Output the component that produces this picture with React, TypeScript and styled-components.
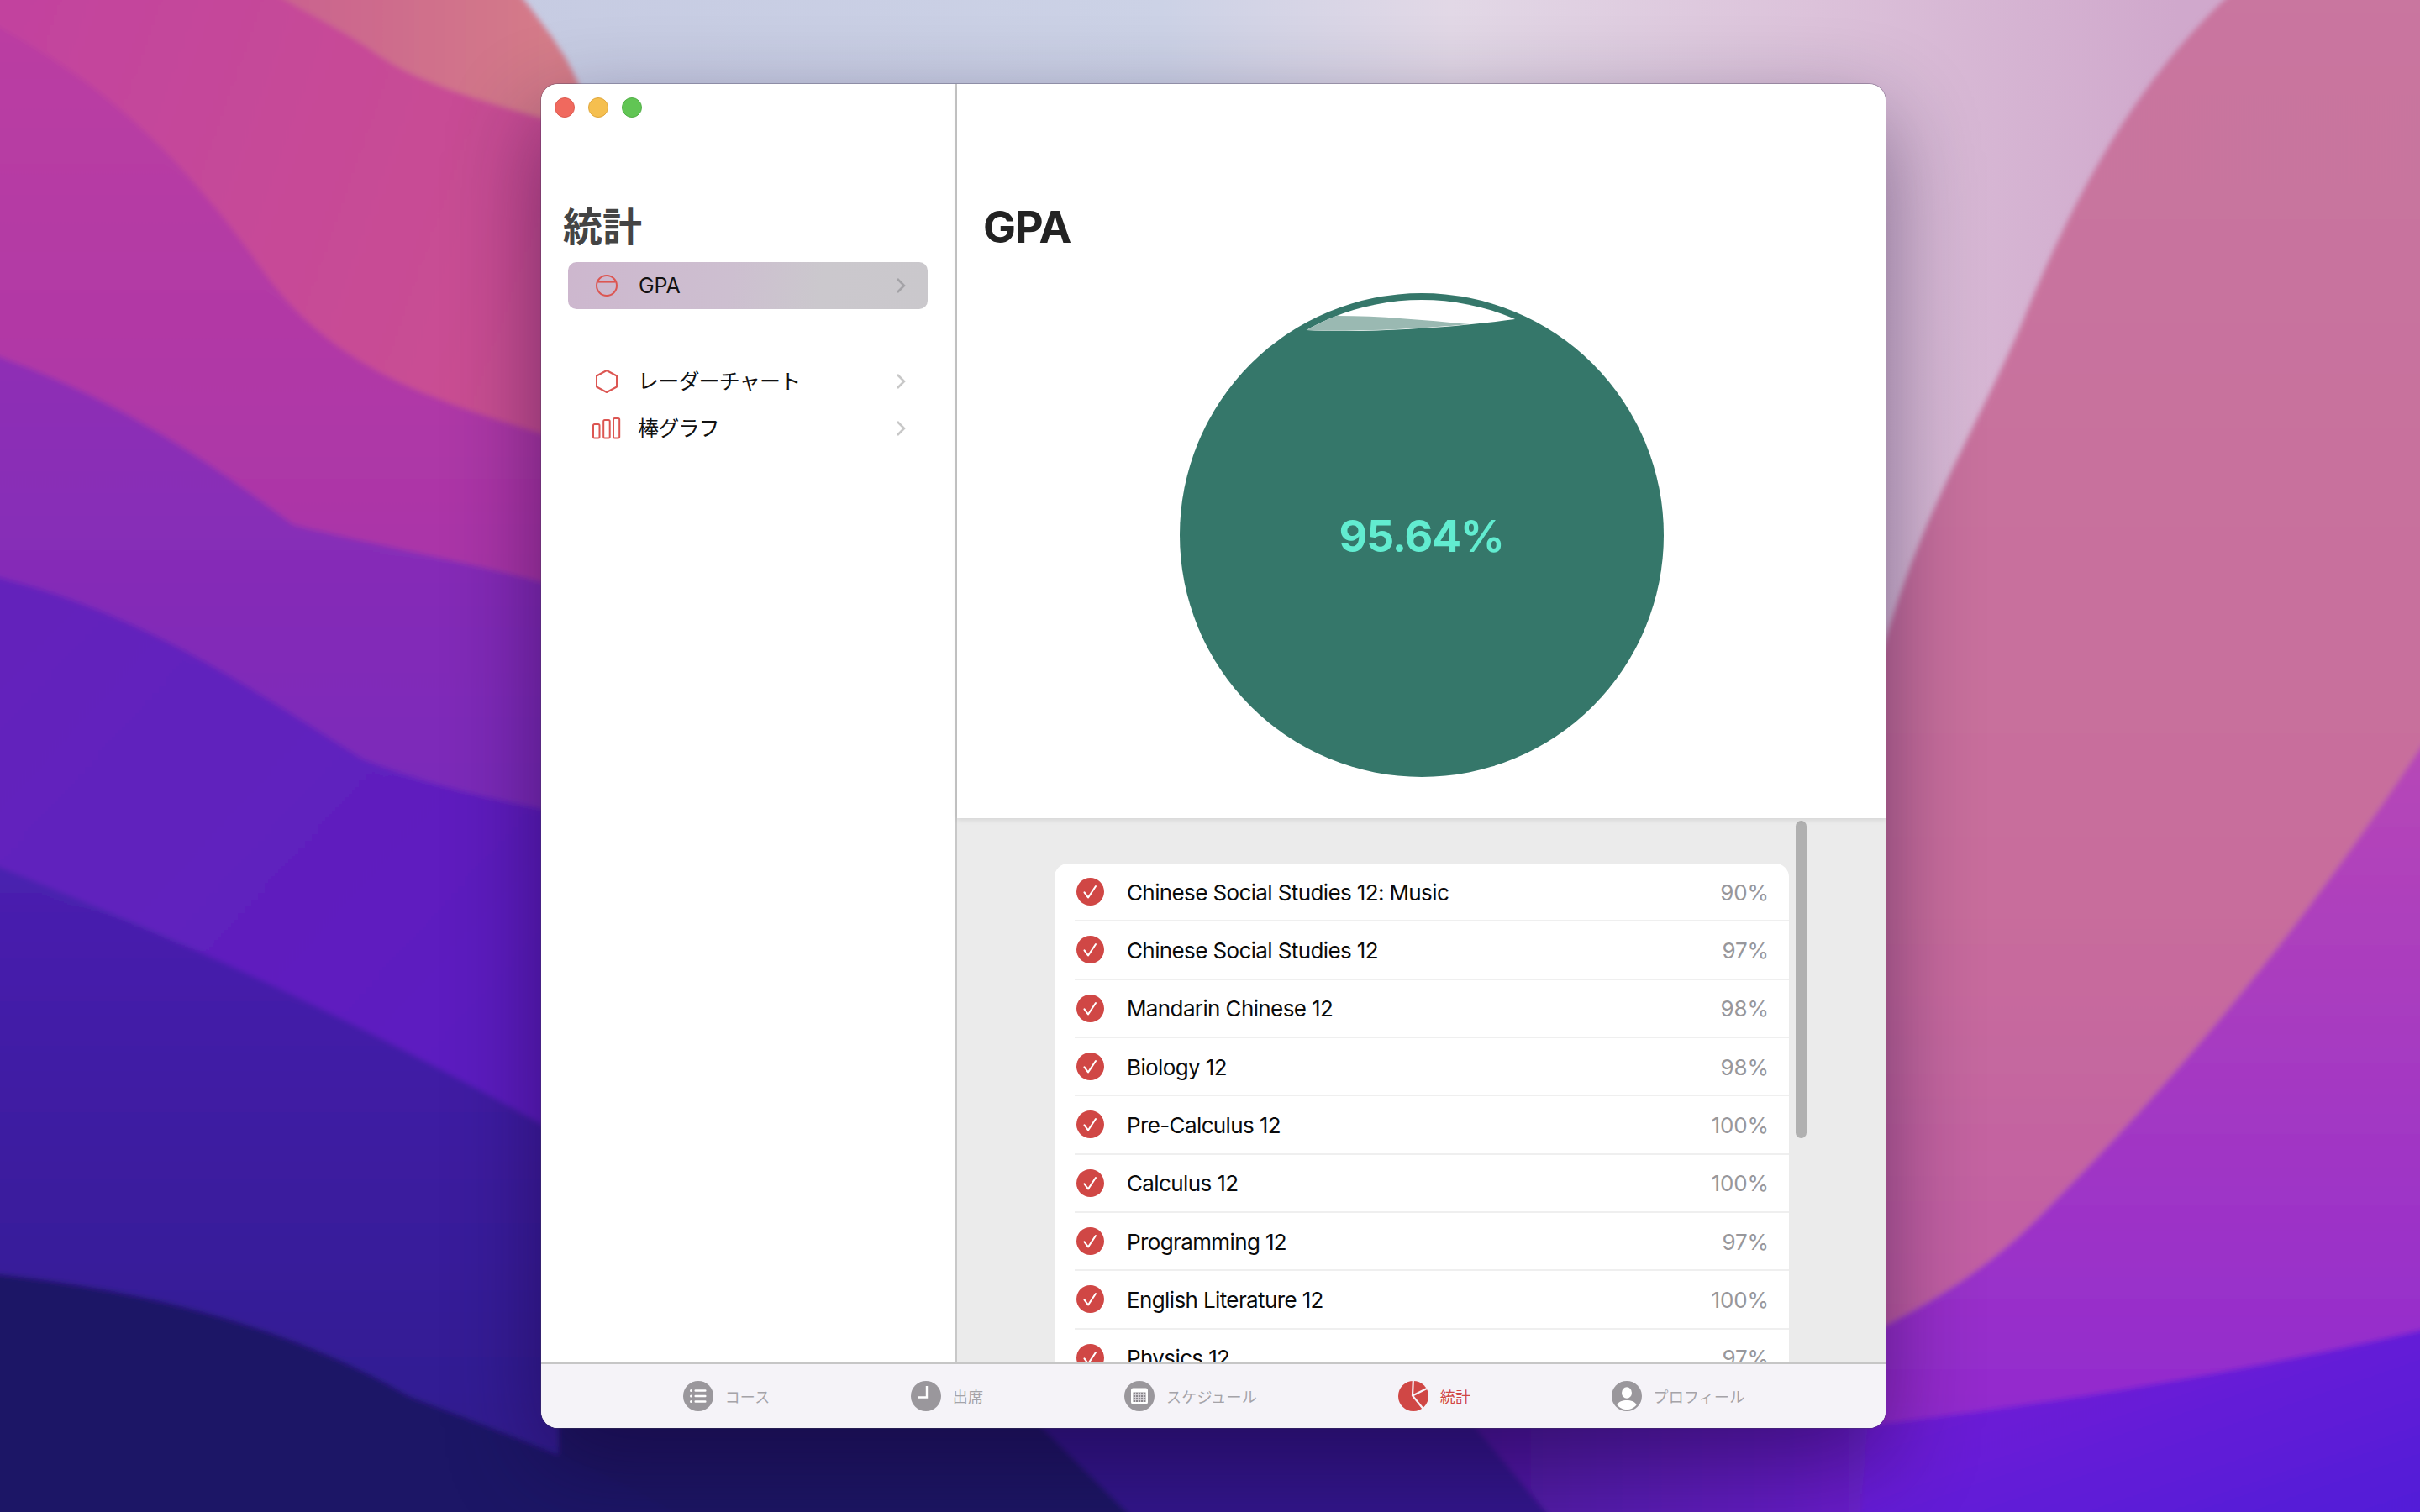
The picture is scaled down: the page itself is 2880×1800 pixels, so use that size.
import React from 'react';
import styled, { createGlobalStyle } from 'styled-components';

const GlobalStyle = createGlobalStyle`
  html, body {
    margin: 0;
    padding: 0;
    background: #2a1a78;
  }
  * {
    box-sizing: border-box;
  }
`;

const latin = `Inter, "Noto Sans CJK JP", sans-serif`;
const red = '#d04745';
const redLine = '#dc5652';
const grey = '#9a979c';
const green = '#35776a';

const Desktop = styled.div`
  position: relative;
  width: 2880px;
  height: 1800px;
  overflow: hidden;
  padding: 100px 0 0 644px;
`;

const WallpaperSvg = styled.svg`
  position: absolute;
  inset: 0;
  width: 2880px;
  height: 1800px;
`;

const Window = styled.div`
  position: relative;
  display: flex;
  flex-direction: column;
  width: 1600px;
  height: 1600px;
  border-radius: 20px;
  overflow: hidden;
  background: #fff;
  box-shadow: 0 0 0 1px rgba(70, 60, 90, 0.35), 0 40px 110px rgba(20, 0, 50, 0.48);
`;

const Main = styled.div`
  display: flex;
  flex: 1;
  min-height: 0;
`;

const Sidebar = styled.aside`
  position: relative;
  width: 495px;
  flex: none;
  padding: 137px 33px 0 32px;
  border-right: 2px solid #c8c8c8;
  background: #fff;
`;

const TrafficLights = styled.div`
  position: absolute;
  top: 16px;
  left: 16px;
  display: flex;
  gap: 16px;
`;

const Light = styled.span<{ $fill: string; $edge: string }>`
  width: 24px;
  height: 24px;
  border-radius: 50%;
  background: ${(p) => p.$fill};
  border: 1px solid ${(p) => p.$edge};
`;

const SidebarTitle = styled.h1`
  margin: 0 0 15px -6px;
  height: 60px;
  font-family: "Noto Sans CJK JP", sans-serif;
  font-size: 47px;
  line-height: 60px;
  font-weight: 700;
  color: #444;
`;

const NavRow = styled.div<{ $selected?: boolean; $gapBefore?: boolean }>`
  display: flex;
  align-items: center;
  height: ${(p) => (p.$selected ? '56px' : '55.5px')};
  margin-top: ${(p) => (p.$gapBefore ? '58.5px' : '0')};
  padding: 0 26px 0 28px;
  border-radius: 10px;
  background: ${(p) => (p.$selected ? 'linear-gradient(100deg, #cdb7ce 0%, #cdbfd0 45%, #cbc8cd 70%, #cac8cc 100%)' : 'transparent')};
`;

const NavIcon = styled.span`
  display: flex;
  align-items: center;
  justify-content: center;
  width: 36px;
  margin-right: 20px;
  flex: none;
`;

const NavLabel = styled.span<{ $jp?: boolean }>`
  flex: 1;
  margin-bottom: ${(p) => (p.$jp ? '4px' : '0')};
  margin-left: ${(p) => (p.$jp ? '-1px' : '0')};
  font-family: ${latin};
  font-size: 25px;
  letter-spacing: ${(p) => (p.$jp ? '-0.8px' : '-0.2px')};
  color: #111;
`;

const Content = styled.section`
  display: flex;
  flex-direction: column;
  flex: 1;
  min-width: 0;
`;

const ChartPanel = styled.div`
  position: relative;
  z-index: 1;
  height: 874px;
  flex: none;
  padding-top: 141px;
  background: #fff;
  box-shadow: 0 2px 6px rgba(0, 0, 0, 0.1);
`;

const ChartTitle = styled.h2`
  margin: 0 0 0 31px;
  height: 60px;
  font-family: ${latin};
  font-size: 52px;
  line-height: 60px;
  font-weight: 700;
  letter-spacing: -1px;
  color: #232323;
`;

const Chart = styled.div`
  position: relative;
  width: 576px;
  height: 576px;
  margin: 48px auto 0;
`;

const Percent = styled.div`
  position: absolute;
  left: 0;
  right: 0;
  top: 262.5px;
  text-align: center;
  font-family: ${latin};
  font-size: 52px;
  line-height: 54px;
  font-weight: 700;
  letter-spacing: -1.2px;
  color: #62ecd0;
`;

const ListPanel = styled.div`
  position: relative;
  flex: 1;
  min-height: 0;
  overflow: hidden;
  padding: 54px 0 0 116px;
  background: #ebebeb;
`;

const ScrollThumb = styled.div`
  position: absolute;
  top: 3px;
  left: 998px;
  width: 13px;
  height: 378px;
  border-radius: 7px;
  background: #b0b0b0;
`;

const Card = styled.div`
  width: 874px;
  border-radius: 16px;
  background: #fff;
`;

const CourseRow = styled.div`
  display: flex;
  align-items: center;
  height: 69.33px;
  margin-left: 24px;
  padding: 0 24px 0 2px;
  border-bottom: 2px solid #efefef;
`;

const CourseName = styled.span`
  flex: 1;
  margin: 1px 0 0 27px;
  font-family: ${latin};
  font-size: 26px;
  letter-spacing: -0.62px;
  color: #0b0b0b;
`;

const CourseScore = styled.span`
  margin-top: 1px;
  font-family: ${latin};
  font-size: 26px;
  letter-spacing: -0.1px;
  color: #98979b;
`;

const TabBar = styled.nav`
  display: grid;
  grid-template-columns: 235px repeat(4, 290px);
  align-items: center;
  height: 78px;
  flex: none;
  padding-left: 103px;
  border-top: 2px solid #c6c6c6;
  background: #f5f3f8;
`;

const Tab = styled.div`
  display: flex;
  align-items: center;
  justify-content: center;
  gap: 14px;
`;

const TabLabel = styled.span<{ $active?: boolean }>`
  font-family: ${latin};
  font-size: 18px;
  letter-spacing: 0.2px;
  color: ${(p) => (p.$active ? red : '#a5a3a8')};
`;

const Wallpaper = () => (
  <WallpaperSvg viewBox="0 0 1568 980" preserveAspectRatio="none">
    <defs>
      <linearGradient id="sky" x1="0" y1="0" x2="1" y2="0">
        <stop offset="0.2" stopColor="#c6cbe2" />
        <stop offset="0.48" stopColor="#ccd2e6" />
        <stop offset="0.6" stopColor="#e2d8e6" />
        <stop offset="0.75" stopColor="#dcc2da" />
        <stop offset="0.9" stopColor="#d0a8cc" />
      </linearGradient>
      <linearGradient id="blush" x1="0" y1="0" x2="1" y2="0.3">
        <stop offset="0" stopColor="#c2429f" />
        <stop offset="1" stopColor="#ca4f92" />
      </linearGradient>
      <linearGradient id="coral" x1="0" y1="0" x2="1" y2="0">
        <stop offset="0" stopColor="#c9608f" />
        <stop offset="1" stopColor="#d67f88" />
      </linearGradient>
      <linearGradient id="magenta" x1="0" y1="0" x2="0" y2="1">
        <stop offset="0" stopColor="#bb3ea2" />
        <stop offset="1" stopColor="#a633aa" />
      </linearGradient>
      <linearGradient id="violet" x1="0" y1="0" x2="0" y2="1">
        <stop offset="0" stopColor="#8f2fb5" />
        <stop offset="1" stopColor="#7428bb" />
      </linearGradient>
      <linearGradient id="indigo" x1="0" y1="0" x2="1" y2="1">
        <stop offset="0" stopColor="#6423bb" />
        <stop offset="1" stopColor="#5a1cc2" />
      </linearGradient>
      <linearGradient id="navy" x1="0" y1="0" x2="0" y2="1">
        <stop offset="0" stopColor="#4a20b0" />
        <stop offset="1" stopColor="#2c1a8c" />
      </linearGradient>
      <linearGradient id="rose" x1="0" y1="0" x2="0" y2="1">
        <stop offset="0" stopColor="#c9769f" />
        <stop offset="0.6" stopColor="#c86d9c" />
        <stop offset="1" stopColor="#bd55a8" />
      </linearGradient>
      <linearGradient id="orchid" x1="0" y1="0" x2="0" y2="1">
        <stop offset="0" stopColor="#b848b6" />
        <stop offset="1" stopColor="#8c26d2" />
      </linearGradient>
      <linearGradient id="ultra" x1="0" y1="0" x2="1" y2="1">
        <stop offset="0" stopColor="#7a20d6" />
        <stop offset="1" stopColor="#4f1ad8" />
      </linearGradient>
      <linearGradient id="plum" x1="0" y1="0" x2="1" y2="0">
        <stop offset="0" stopColor="#4a189a" />
        <stop offset="1" stopColor="#6a20cc" />
      </linearGradient>
      <filter id="soft">
        <feGaussianBlur stdDeviation="1.6" />
      </filter>
    </defs>
    <rect width="1568" height="980" fill="url(#sky)" />
    <g filter="url(#soft)">
      <path d="M-10 -10 H332 C356 22 372 40 380 70 V320 H-10 Z" fill="url(#blush)" />
      <path d="M170 -10 H332 C356 22 372 40 380 70 V85 C325 68 275 58 240 32 C215 15 190 5 170 -10 Z" fill="url(#coral)" />
      <path d="M-10 12 C60 50 110 90 170 175 C220 245 290 262 380 290 V460 H-10 Z" fill="url(#magenta)" />
      <path d="M-10 228 C70 255 130 295 190 340 C250 355 310 365 380 385 V620 H-10 Z" fill="url(#violet)" />
      <path d="M-10 372 C90 395 160 445 235 492 C285 512 330 520 380 530 V800 H-10 Z" fill="url(#indigo)" />
      <path d="M-10 558 C120 610 240 665 380 745 V990 H-10 Z" fill="url(#navy)" />
      <path d="M1452 -10 C1395 40 1350 110 1310 210 C1275 290 1240 340 1215 440 L1200 990 H1578 V-10 Z" fill="url(#rose)" />
      <path d="M1578 470 C1500 590 1420 690 1320 790 C1280 830 1240 850 1200 870 V990 H1578 Z" fill="url(#orchid)" />
      <path d="M1578 860 C1450 890 1330 910 1200 925 V990 H1578 Z" fill="url(#ultra)" />
      <path d="M362 900 H660 L745 990 H362 Z" fill="#1e1464" />
      <path d="M650 900 H940 L1015 990 H740 Z" fill="#31128a" />
      <path d="M935 900 H1210 V926 L1205 990 H1010 Z" fill="url(#plum)" />
      <path d="M-10 825 C90 835 190 860 265 905 C330 930 400 955 450 990 H-10 Z" fill="#1f1566" />
    </g>
  </WallpaperSvg>
);

const Chevron = ({ dark }: { dark?: boolean }) => (
  <svg width="12" height="20" viewBox="0 0 12 20">
    <path d="M2 2 L10 10 L2 18" fill="none" stroke={dark ? '#a4a3a7' : '#c8c8c8'} strokeWidth="2.6" />
  </svg>
);

const GpaIcon = () => (
  <svg width="28" height="28" viewBox="0 0 28 28">
    <circle cx="14" cy="14" r="12" fill="none" stroke={redLine} strokeWidth="2" />
    <path d="M3.6 9.6 H24.4" stroke={redLine} strokeWidth="2" />
  </svg>
);

const RadarIcon = () => (
  <svg width="28" height="30" viewBox="0 0 28 30">
    <path d="M14 2 L26 8.5 V21.5 L14 28 L2 21.5 V8.5 Z" fill="none" stroke={redLine} strokeWidth="2" strokeLinejoin="round" />
  </svg>
);

const BarsIcon = () => (
  <svg width="34" height="26" viewBox="0 0 34 26">
    <rect x="1" y="8" width="7.5" height="16.5" rx="1.5" fill="none" stroke={redLine} strokeWidth="2" />
    <rect x="13.2" y="3" width="7.5" height="21.5" rx="1.5" fill="none" stroke={redLine} strokeWidth="2" />
    <rect x="25" y="1" width="7.2" height="23.5" rx="1.5" fill="none" stroke={redLine} strokeWidth="2" />
  </svg>
);

const CheckIcon = () => (
  <svg width="33" height="33" viewBox="0 0 33 33">
    <circle cx="16.5" cy="16.5" r="16.5" fill={red} />
    <path d="M9.5 17.3 L14 23.5 L23 10" fill="none" stroke="#fff" strokeWidth="2.1" strokeLinecap="round" strokeLinejoin="round" />
  </svg>
);

const TabListIcon = () => (
  <svg width="36" height="36" viewBox="0 0 36 36">
    <circle cx="18" cy="18" r="18" fill={grey} />
    <g fill="#fff">
      <circle cx="9.5" cy="11.5" r="1.5" />
      <circle cx="9.5" cy="18" r="1.5" />
      <circle cx="9.5" cy="24.5" r="1.5" />
      <rect x="13.5" y="10.3" width="14" height="2.4" rx="1" />
      <rect x="13.5" y="16.8" width="14" height="2.4" rx="1" />
      <rect x="13.5" y="23.3" width="14" height="2.4" rx="1" />
    </g>
  </svg>
);

const TabClockIcon = () => (
  <svg width="36" height="36" viewBox="0 0 36 36">
    <circle cx="18" cy="18" r="18" fill={grey} />
    <path d="M19 6 V19.5 H8.5" fill="none" stroke="#fff" strokeWidth="2.4" />
  </svg>
);

const TabCalendarIcon = () => (
  <svg width="36" height="36" viewBox="0 0 36 36">
    <circle cx="18" cy="18" r="18" fill={grey} />
    <rect x="8" y="8.5" width="20" height="19" rx="2.5" fill="#fff" />
    <rect x="10.5" y="13.5" width="15" height="11.5" fill="#8a878c" />
    <path d="M13.5 13.5 V25 M16.5 13.5 V25 M19.5 13.5 V25 M22.5 13.5 V25 M10.5 16.5 H25.5 M10.5 19.5 H25.5 M10.5 22.5 H25.5" stroke="#dddbdf" strokeWidth="0.8" />
  </svg>
);

const TabPieIcon = () => (
  <svg width="36" height="36" viewBox="0 0 36 36">
    <circle cx="18" cy="18" r="18" fill={red} />
    <path d="M17.8 0 L17 17.5 L29.6 33 M17 17.5 L34 9" fill="none" stroke="#f5f3f8" strokeWidth="2.2" />
  </svg>
);

const TabPersonIcon = () => (
  <svg width="36" height="36" viewBox="0 0 36 36">
    <circle cx="18" cy="18" r="18" fill={grey} />
    <ellipse cx="18" cy="14" rx="6" ry="6.8" fill="#fff" />
    <path d="M6.5 28.5 C8 24.5 13 23 18 23 S28 24.5 29.5 28.5 C27 32 22.5 34 18 34 S9 32 6.5 28.5 Z" fill="#fff" />
  </svg>
);

const courses = [
  ['Chinese Social Studies 12: Music', '90%'],
  ['Chinese Social Studies 12', '97%'],
  ['Mandarin Chinese 12', '98%'],
  ['Biology 12', '98%'],
  ['Pre-Calculus 12', '100%'],
  ['Calculus 12', '100%'],
  ['Programming 12', '97%'],
  ['English Literature 12', '100%'],
  ['Physics 12', '97%'],
];

const GaugeChart = () => (
  <Chart>
    <svg width="576" height="576" viewBox="0 0 576 576">
      <defs>
        <clipPath id="gaugeClip">
          <circle cx="288" cy="288" r="280" />
        </clipPath>
      </defs>
      <circle cx="288" cy="288" r="288" fill={green} />
      <g clipPath="url(#gaugeClip)">
        <path d="M0 0 H576 V31 H399 C310 43 210 47 151 44 H0 Z" fill="#fff" />
        <path d="M186 27 C240 27 290 32 345 37 C300 41 210 47 151 44 L120 44 V27 Z" fill="#9ab9b2" />
      </g>
    </svg>
    <Percent>95.64%</Percent>
  </Chart>
);

export default function App() {
  return (
    <>
      <GlobalStyle />
      <Desktop>
        <Wallpaper />
        <Window>
          <Main>
            <Sidebar>
              <TrafficLights>
                <Light $fill="#f0695e" $edge="#dc5a50" />
                <Light $fill="#f5bf4f" $edge="#dfa63c" />
                <Light $fill="#61c554" $edge="#52ae47" />
              </TrafficLights>
              <SidebarTitle>統計</SidebarTitle>
              <NavRow $selected>
                <NavIcon><GpaIcon /></NavIcon>
                <NavLabel>GPA</NavLabel>
                <Chevron dark />
              </NavRow>
              <NavRow $gapBefore>
                <NavIcon><RadarIcon /></NavIcon>
                <NavLabel $jp>レーダーチャート</NavLabel>
                <Chevron />
              </NavRow>
              <NavRow>
                <NavIcon><BarsIcon /></NavIcon>
                <NavLabel $jp>棒グラフ</NavLabel>
                <Chevron />
              </NavRow>
            </Sidebar>
            <Content>
              <ChartPanel>
                <ChartTitle>GPA</ChartTitle>
                <GaugeChart />
              </ChartPanel>
              <ListPanel>
                <Card>
                  {courses.map(([name, score]) => (
                    <CourseRow key={name}>
                      <CheckIcon />
                      <CourseName>{name}</CourseName>
                      <CourseScore>{score}</CourseScore>
                    </CourseRow>
                  ))}
                </Card>
                <ScrollThumb />
              </ListPanel>
            </Content>
          </Main>
          <TabBar>
            <Tab><TabListIcon /><TabLabel>コース</TabLabel></Tab>
            <Tab><TabClockIcon /><TabLabel>出席</TabLabel></Tab>
            <Tab><TabCalendarIcon /><TabLabel>スケジュール</TabLabel></Tab>
            <Tab><TabPieIcon /><TabLabel $active>統計</TabLabel></Tab>
            <Tab><TabPersonIcon /><TabLabel>プロフィール</TabLabel></Tab>
          </TabBar>
        </Window>
      </Desktop>
    </>
  );
}
